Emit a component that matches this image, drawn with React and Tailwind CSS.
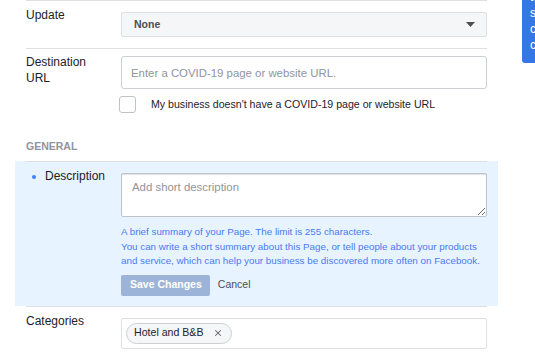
import { X } from 'lucide-react'

const LABEL = 'w-[95px] shrink-0 text-[12px] leading-[16px] text-[#1d2129]'

export default function App() {
    return (
        <div className="relative w-[535px] h-[353px] overflow-hidden bg-white font-['Liberation_Sans',Arial,sans-serif]">
            <div className="w-[483px] ml-[15px]">
                {/* Update */}
                <div className="mx-[11px] border-t border-[#dddfe2] flex pt-[6px] h-[48px]">
                    <div className={LABEL}>Update</div>
                    <div className="mt-[5px] w-[367px] h-[25px] flex items-center justify-between rounded-[2px] border border-[#dddfe2] bg-[#f5f6f7] pl-[12px] pr-[11px]">
                        <span className="text-[10.5px] font-bold text-[#4b4f56]">None</span>
                        <svg width="9" height="5" viewBox="0 0 9 5">
                            <path d="M0 0 H9 L4.5 5 Z" fill="#4b4f56" />
                        </svg>
                    </div>
                </div>

                {/* Destination URL */}
                <div className="mx-[11px] border-t border-[#dddfe2] flex pt-[5px] h-[88px]">
                    <div className={LABEL}>Destination<br />URL</div>
                    <div className="w-[367px] pt-[2px]">
                        <input
                            className="w-full h-[33px] rounded-[3px] border border-[#ccd0d5] px-[9px] text-[11.4px] text-[#1d2129] placeholder:text-[#90949c] outline-none"
                            placeholder="Enter a COVID-19 page or website URL."
                        />
                        <div className="flex items-center mt-[7px] -ml-[2px]">
                            <div className="w-[17px] h-[17px] rounded-[3px] border border-[#bec3c9] bg-white" />
                            <span className="ml-[15px] text-[10.6px] text-[#1d2129]">My business doesn't have a COVID-19 page or website URL</span>
                        </div>
                    </div>
                </div>

                {/* General heading */}
                <div className="mx-[11px] h-[25px] pt-[3px] text-[10.5px] font-bold text-[#90949c] leading-[14px]">GENERAL</div>

                {/* Description (highlighted) */}
                <div className="bg-[#e7f3ff] px-[11px] pb-[10px]">
                    <div className="border-t border-[#dddfe2] flex pt-[6px]">
                        <div className="w-[95px] shrink-0 flex items-start text-[12px] leading-[16px] text-[#1d2129]">
                            <span className="w-[4px] h-[4px] rounded-full bg-[#4080ff] ml-[6px] mr-[9px] mt-[7px]" />
                            Description
                        </div>
                        <div className="w-[367px] pt-[5px]">
                            <textarea
                                className="block w-full h-[44px] rounded-[2px] border border-[#bec3c9] shadow-[inset_0_1px_1px_rgba(0,0,0,0.12)] bg-white px-[10px] pt-[6px] text-[11.4px] leading-[15px] text-[#1d2129] placeholder:text-[#90949c] outline-none resize-y"
                                placeholder="Add short description"
                            />
                            <div className="mt-[8px] text-[9.8px] leading-[14.5px] text-[#4a7af0] whitespace-nowrap">
                                <div>A brief summary of your Page. The limit is 255 characters.</div>
                                <div>You can write a short summary about this Page, or tell people about your products</div>
                                <div>and service, which can help your business be discovered more often on Facebook.</div>
                            </div>
                            <div className="flex items-center mt-[6px]">
                                <button className="h-[21px] pl-[9px] pr-[8px] rounded-[2px] bg-[#9cb4d8] text-white text-[10.5px] font-bold">Save Changes</button>
                                <span className="ml-[8px] text-[10.5px] text-[#4b4f56]">Cancel</span>
                            </div>
                        </div>
                    </div>
                </div>

                {/* Categories */}
                <div className="mx-[11px] border-t border-[#dddfe2] flex pt-[6px]">
                    <div className={LABEL}>Categories</div>
                    <div className="mt-[5px] w-[367px] h-[31px] rounded-[2px] border border-[#dddfe2] bg-white flex items-center pl-[4px]">
                        <div className="h-[21px] flex items-center rounded-full border border-[#ccd0d5] bg-[#f5f6f7] pl-[7px] pr-[8px] text-[10.6px] text-[#1d2129]">
                            Hotel and B&amp;B
                            <X className="ml-[9px] w-[10px] h-[10px] text-[#606770]" strokeWidth={2.5} />
                        </div>
                    </div>
                </div>
            </div>

            {/* Tooltip peeking from the right edge */}
            <div className="absolute left-[522px] top-[-14px] w-[200px] h-[77px] rounded-bl-[3px] bg-[#3578e5] pl-[8px] pt-[3px] text-[12px] leading-[16px] text-white whitespace-nowrap">
                <div>to</div>
                <div>show</div>
                <div>customers</div>
                <div>changes</div>
            </div>
        </div>
    )
}
